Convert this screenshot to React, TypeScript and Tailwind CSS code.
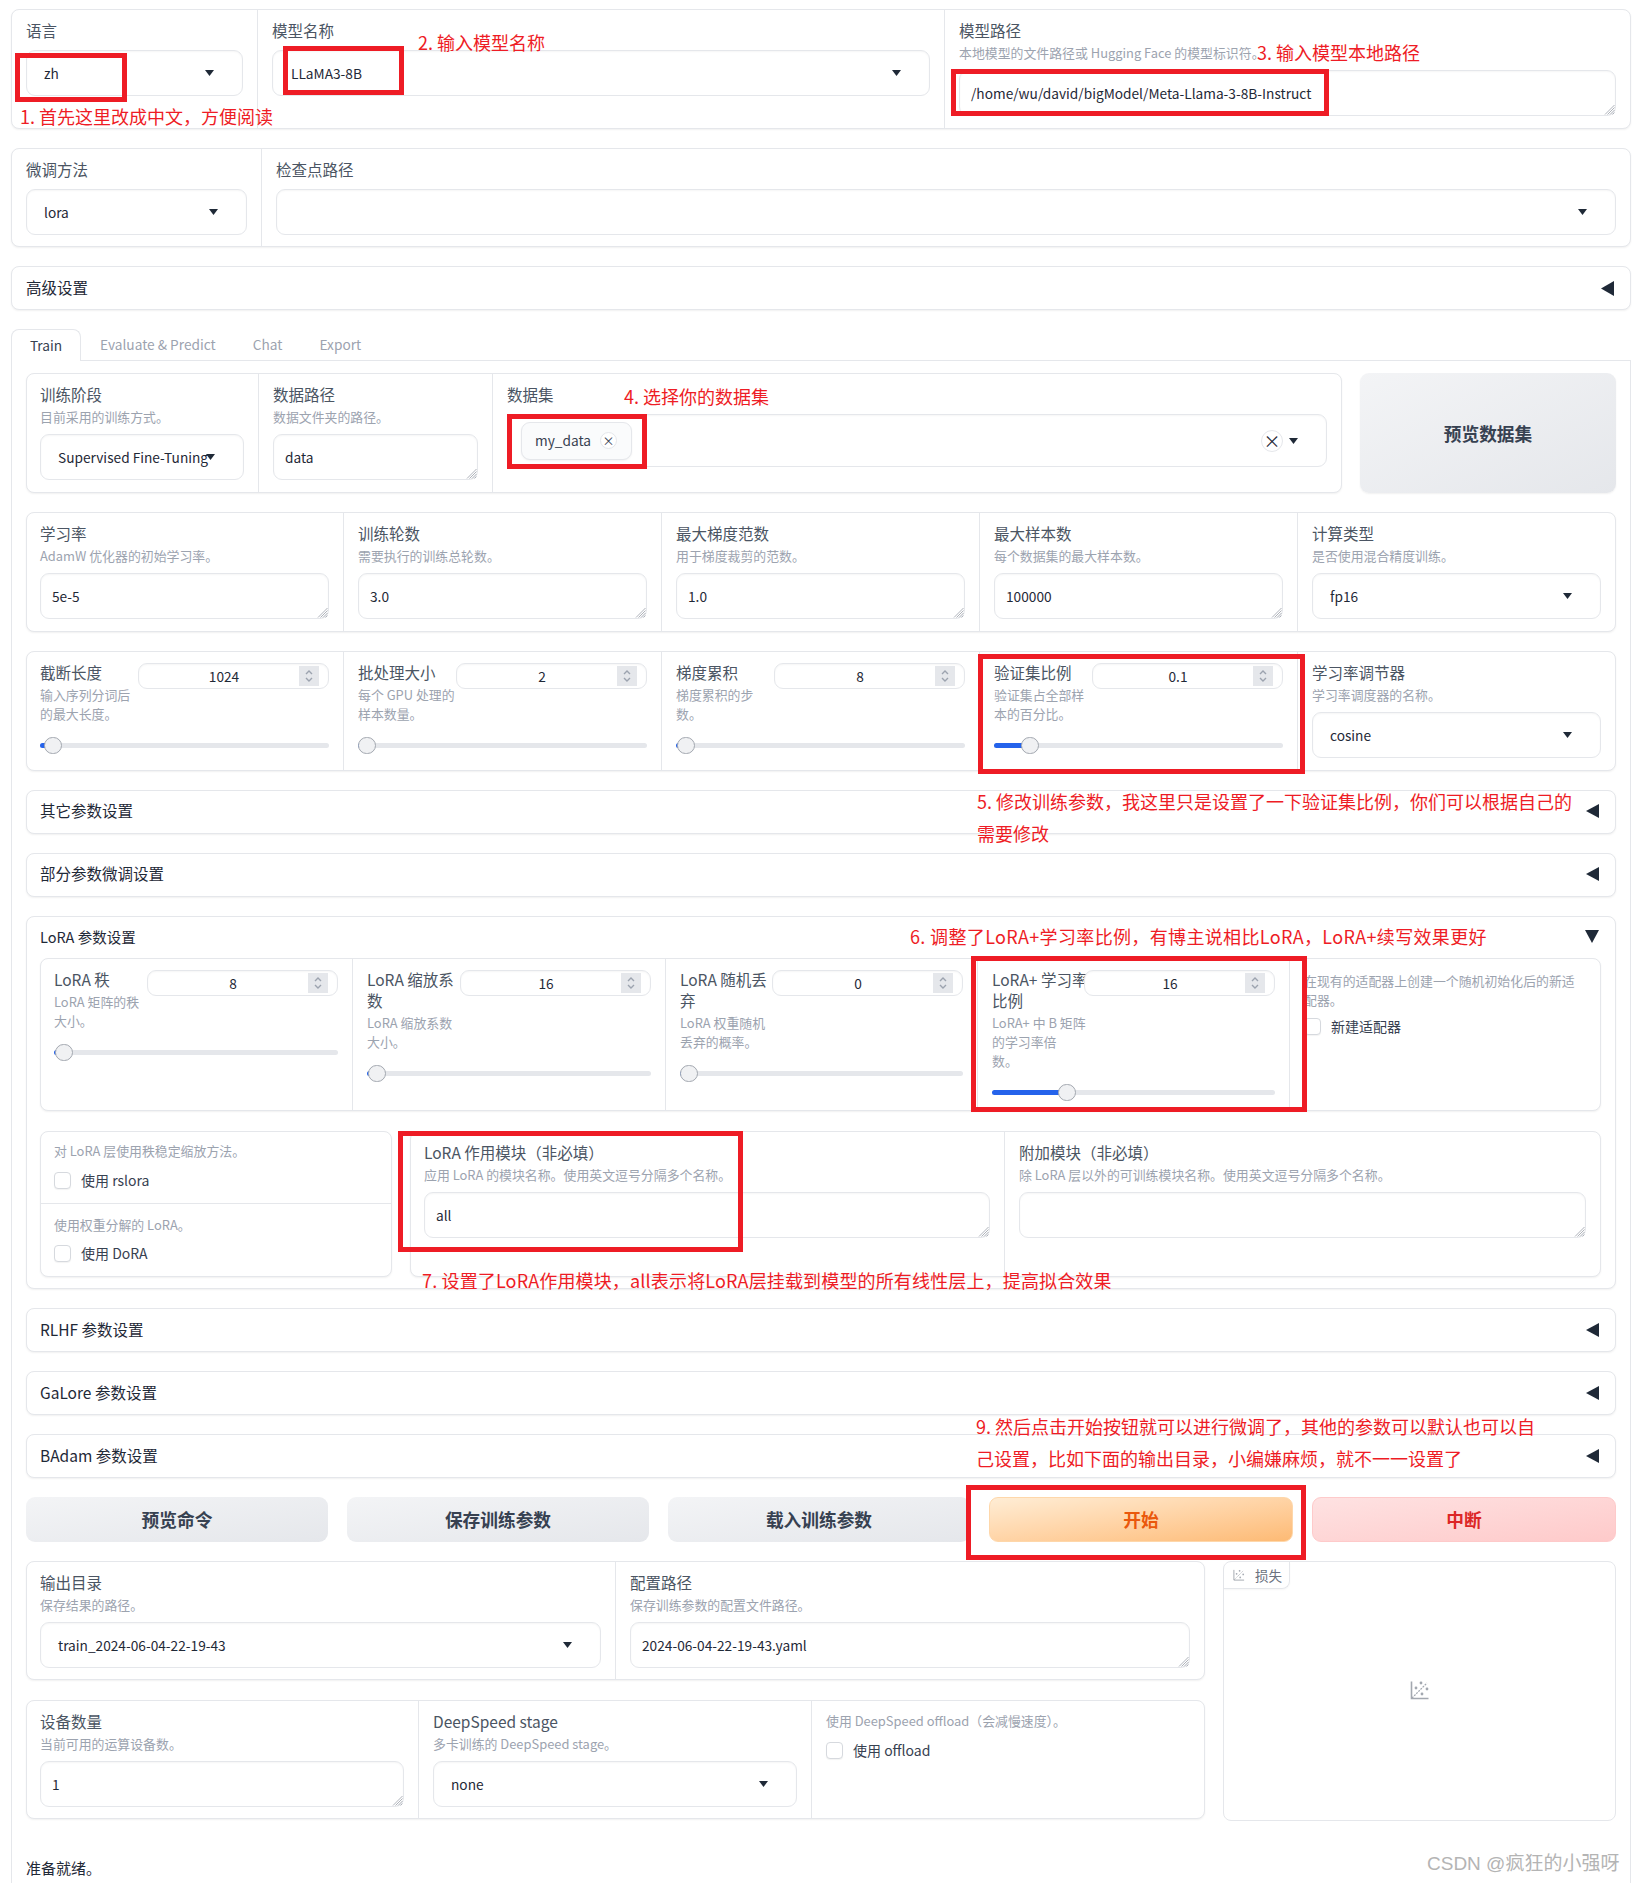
import type { ReactNode } from 'react';
import clsx from 'clsx';

const panelCls = 'flex rounded-[8px] border border-[#e5e7eb] bg-white shadow-[0_1px_2px_rgba(0,0,0,0.06)]';
const boxCls = 'rounded-[9px] border border-[#e5e7eb] bg-white shadow-[inset_0_1px_2px_rgba(0,0,0,0.04)]';

function Panel({ className, children }: { className?: string; children: ReactNode }) {
  return <div className={clsx(panelCls, className)}>{children}</div>;
}

function Cell({ className, children, top = 'pt-[10px]' }: { className?: string; children: ReactNode; top?: string }) {
  return <div className={clsx('flex flex-col border-r border-[#e5e7eb] px-[14px] last:border-r-0', top, className)}>{children}</div>;
}

function Label({ children }: { children: ReactNode }) {
  return <div className="text-[15.5px] leading-[21px] text-[#4b5563]">{children}</div>;
}

function Desc({ children }: { children: ReactNode }) {
  return <div className="mt-[2px] text-[12.9px] leading-[19px] text-[#9ca3af]">{children}</div>;
}

function Caret() {
  return (
    <svg width="9" height="6" viewBox="0 0 9 6" className="shrink-0 fill-[#1f2937]">
      <path d="M0 0h9L4.5 6z" />
    </svg>
  );
}

function Select({ value, className, left = 'pl-[17px]' }: { value: string; className?: string; left?: string }) {
  return (
    <div className={clsx(boxCls, 'flex h-[46px] items-center pr-[28px] text-[13.7px] text-[#1f2937]', left, className)}>
      <div className="min-w-0 flex-1 whitespace-nowrap">{value}</div>
      <Caret />
    </div>
  );
}

function Area({ value = '', className }: { value?: string; className?: string }) {
  return (
    <div className={clsx('relative', className)}>
      <textarea
        readOnly
        rows={1}
        defaultValue={value}
        className={clsx(boxCls, 'block h-[46px] w-full resize-none px-[11px] py-[12px] text-[13.7px] leading-[20px] text-[#1f2937] outline-none')}
      />
      {/* resize grip */}
      <svg width="11" height="11" viewBox="0 0 11 11" fill="none" stroke="#9aa0a8" strokeWidth="0.8" className="absolute right-[1px] bottom-[1px]">
        <path d="M10.5 1L1 10.5M10.5 3.5L3.5 10.5M10.5 6L6 10.5M10.5 8.5L8.5 10.5" />
      </svg>
    </div>
  );
}

function Spinner() {
  return (
    <div className="mr-[9px] flex h-[20px] w-[20px] shrink-0 items-center justify-center bg-[#e5e7eb]">
      <svg width="12" height="16" viewBox="0 0 12 16" fill="none" stroke="#9ca3af" strokeWidth="1.4">
        <path d="M3 6l3-3 3 3M3 10l3 3 3-3" />
      </svg>
    </div>
  );
}

function Slider({ label, desc, value, offset, className }: { label: string; desc: string; value: string; offset: number; className?: string }) {
  return (
    <Cell className={className}>
      <div className="flex items-start">
        <div className="min-w-0 flex-1 whitespace-pre">
          <Label>{label}</Label>
          <div className="mt-[1px]">
            <Desc>{desc}</Desc>
          </div>
        </div>
        <div className={clsx(boxCls, 'mt-[1px] flex h-[26px] w-[191px] shrink-0 items-center')}>
          <div className="flex-1 pl-[10px] text-center text-[13.7px] text-[#1f2937]">{value}</div>
          <Spinner />
        </div>
      </div>
      <div className="relative mt-[13px] flex h-[18px] items-center">
        <div className="h-[5px] w-full rounded-full bg-[#e5e7eb]">
          <div className="h-[5px] rounded-l-full bg-[#2563eb]" style={{ width: offset }} />
        </div>
        <div
          className="absolute top-[1px] h-[17px] w-[18px] -translate-x-1/2 rounded-full border border-[#a3a8b0] bg-[#f0f1f3]"
          style={{ left: offset }}
        />
      </div>
    </Cell>
  );
}

function Check({ label, className = 'mt-[10px]' }: { label: string; className?: string }) {
  return (
    <div className={clsx('flex items-center gap-[10px] text-[14px] leading-[20px] text-[#374151]', className)}>
      <div className="h-[17px] w-[17px] rounded-[4px] border border-[#d6d9de] bg-white shadow-[0_1px_1px_rgba(0,0,0,0.05)]" />
      {label}
    </div>
  );
}

function Accordion({ title, raise }: { title: string; raise?: boolean }) {
  return (
    <div className={clsx(panelCls, 'h-[44px] shrink-0 items-center justify-between pr-[16px] pl-[13px] text-[15.5px] text-[#1f2937]', raise && 'pb-[2px]')}>
      {title}
      <svg width="13" height="14" viewBox="0 0 13 14" className="fill-[#1f2937]">
        <path d="M13 0v14L0 7z" />
      </svg>
    </div>
  );
}

function Btn({ children, className }: { children: ReactNode; className?: string }) {
  return (
    <button className={clsx('flex flex-1 items-center justify-center rounded-[9px] text-[17.7px] font-semibold', className)}>
      {children}
    </button>
  );
}

function PlotIcon({ size, className }: { size: number; className?: string }) {
  return (
    <svg width={size} height={size} viewBox="0 0 20 20" fill="none" className={className}>
      <path d="M1.5 1.5v17h17" stroke="#a3a8b0" strokeWidth="1.6" />
      <path d="M2 18L17 3" stroke="#a3a8b0" strokeWidth="1.2" strokeDasharray="2 1" />
      <circle cx="6" cy="8" r="1.4" fill="#a3a8b0" />
      <circle cx="11" cy="3" r="1.4" fill="#a3a8b0" />
      <circle cx="17" cy="9" r="1.4" fill="#a3a8b0" />
      <circle cx="12" cy="14" r="1.4" fill="#a3a8b0" />
    </svg>
  );
}

export default function App() {
  return (
    <div className="relative flex h-[1883px] w-[1634px] flex-col gap-[19px] overflow-hidden bg-white pt-[9px] pr-[3px] pl-[11px] font-['Noto_Sans_CJK_SC',sans-serif]">
      {/* top model row */}
      <Panel className="h-[120px] shrink-0">
        <Cell className="w-[246px]">
          <Label>语言</Label>
          <Select value="zh" className="mt-[9px]" />
        </Cell>
        <Cell className="w-[687px]">
          <Label>模型名称</Label>
          <Select value="LLaMA3-8B" left="pl-[18px]" className="mt-[9px]" />
        </Cell>
        <Cell className="flex-1">
          <Label>模型路径</Label>
          <Desc>本地模型的文件路径或 Hugging Face 的模型标识符。</Desc>
          <Area value="/home/wu/david/bigModel/Meta-Llama-3-8B-Instruct" className="mt-[8px]" />
        </Cell>
      </Panel>

      <Panel className="h-[99px] shrink-0">
        <Cell className="w-[250px]">
          <Label>微调方法</Label>
          <Select value="lora" className="mt-[9px]" />
        </Cell>
        <Cell className="flex-1">
          <Label>检查点路径</Label>
          <Select value="" className="mt-[9px]" />
        </Cell>
      </Panel>

      <div className={clsx(panelCls, 'h-[44px] shrink-0 items-center justify-between pr-[16px] pl-[14px] text-[15.5px] text-[#1f2937]')}>
        高级设置
        <svg width="13" height="15" viewBox="0 0 13 15" className="fill-[#1f2937]">
          <path d="M13 0v15L0 7.5z" />
        </svg>
      </div>

      {/* tabs */}
      <div className="flex min-h-0 flex-1 flex-col">
        <div className="relative z-10 flex h-[31px] text-[13.7px] text-[#9ca3af]">
          <div className="-mb-px flex w-[70px] items-center justify-center rounded-t-[8px] border border-b-0 border-[#e5e7eb] bg-white text-[#374151]">Train</div>
          <div className="ml-[19px] flex items-center">Evaluate &amp; Predict</div>
          <div className="ml-[37px] flex items-center">Chat</div>
          <div className="ml-[37px] flex items-center">Export</div>
        </div>

        <div className="flex flex-1 flex-col gap-[19px] border-x border-t border-[#e5e7eb] px-[14px] pt-[12px]">
          <div className="flex h-[120px] shrink-0 gap-[18px]">
            <Panel className="flex-1">
              <Cell className="w-[232px] pl-[13px]">
                <Label>训练阶段</Label>
                <Desc>目前采用的训练方式。</Desc>
                <Select value="Supervised Fine-Tuning" className="mt-[8px]" />
              </Cell>
              <Cell className="w-[234px]">
                <Label>数据路径</Label>
                <Desc>数据文件夹的路径。</Desc>
                <Area value="data" className="mt-[8px]" />
              </Cell>
              <Cell className="flex-1">
                <Label>数据集</Label>
                <div className={clsx(boxCls, 'mt-[9px] flex h-[53px] items-center pr-[28px] pl-[13px] text-[13.7px] text-[#374151]')}>
                  <div className="flex h-[38px] w-[111px] items-center justify-between rounded-[9px] border border-[#e5e7eb] bg-[#fafbfc] pr-[14px] pl-[13px] shadow-[0_1px_2px_rgba(0,0,0,0.05)]">
                    my_data
                    <span className="flex h-[17px] w-[17px] items-center justify-center rounded-full border border-[#e5e7eb] bg-white text-[12px] leading-none">×</span>
                  </div>
                  <div className="flex-1" />
                  <span className="mr-[6px] flex h-[22px] w-[22px] items-center justify-center rounded-full border border-[#e5e7eb] text-[17px] leading-none text-[#1f2937]">×</span>
                  <Caret />
                </div>
              </Cell>
            </Panel>
            <Btn className="w-[256px] flex-none bg-linear-to-br from-[#f3f4f6] to-[#e5e7eb] text-[#374151] shadow-[0_1px_2px_rgba(0,0,0,0.06)]">预览数据集</Btn>
          </div>

          <Panel className="h-[120px] shrink-0">
            <Cell className="w-[317px] pl-[13px]">
              <Label>学习率</Label>
              <Desc>AdamW 优化器的初始学习率。</Desc>
              <Area value="5e-5" className="mt-[8px]" />
            </Cell>
            <Cell className="w-[318px]">
              <Label>训练轮数</Label>
              <Desc>需要执行的训练总轮数。</Desc>
              <Area value="3.0" className="mt-[8px]" />
            </Cell>
            <Cell className="w-[318px]">
              <Label>最大梯度范数</Label>
              <Desc>用于梯度裁剪的范数。</Desc>
              <Area value="1.0" className="mt-[8px]" />
            </Cell>
            <Cell className="w-[318px]">
              <Label>最大样本数</Label>
              <Desc>每个数据集的最大样本数。</Desc>
              <Area value="100000" className="mt-[8px]" />
            </Cell>
            <Cell className="flex-1">
              <Label>计算类型</Label>
              <Desc>是否使用混合精度训练。</Desc>
              <Select value="fp16" className="mt-[8px]" />
            </Cell>
          </Panel>

          <Panel className="h-[120px] shrink-0">
            <Slider className="w-[317px] pl-[13px]" label="截断长度" desc={'输入序列分词后\n的最大长度。'} value="1024" offset={13} />
            <Slider className="w-[318px]" label="批处理大小" desc={'每个 GPU 处理的\n样本数量。'} value="2" offset={9} />
            <Slider className="w-[318px]" label="梯度累积" desc={'梯度累积的步\n数。'} value="8" offset={10} />
            <Slider className="w-[318px]" label="验证集比例" desc={'验证集占全部样\n本的百分比。'} value="0.1" offset={36} />
            <Cell className="flex-1">
              <Label>学习率调节器</Label>
              <Desc>学习率调度器的名称。</Desc>
              <Select value="cosine" className="mt-[8px]" />
            </Cell>
          </Panel>

          <Accordion title="其它参数设置" raise />
          <Accordion title="部分参数微调设置" raise />

          {/* LoRA section */}
          <div className={clsx(panelCls, 'h-[373px] shrink-0 flex-col pr-[14px] pl-[13px]')}>
            <div className="flex h-[41px] items-center justify-between pr-[2px] pb-[2px] text-[14.5px] text-[#1f2937]">
              LoRA 参数设置
              <svg width="14" height="13" viewBox="0 0 14 13" className="fill-[#1f2937]">
                <path d="M0 0h14L7 13z" />
              </svg>
            </div>
            <Panel className="h-[153px] shrink-0">
              <Slider className="w-[312px] pl-[13px]" label="LoRA 秩" desc={'LoRA 矩阵的秩\n大小。'} value="8" offset={10} />
              <Slider className="w-[313px]" label={'LoRA 缩放系\n数'} desc={'LoRA 缩放系数\n大小。'} value="16" offset={10} />
              <Slider className="w-[312px]" label={'LoRA 随机丢\n弃'} desc={'LoRA 权重随机\n丢弃的概率。'} value="0" offset={9} />
              <Slider className="w-[312px]" label={'LoRA+ 学习率\n比例'} desc={'LoRA+ 中 B 矩阵\n的学习率倍\n数。'} value="16" offset={75} />
              <Cell className="flex-1">
                <div className="whitespace-pre">
                  <Desc>{'在现有的适配器上创建一个随机初始化后的新适\n配器。'}</Desc>
                </div>
                <Check label="新建适配器" className="mt-[7px]" />
              </Cell>
            </Panel>

            <div className="mt-[20px] flex h-[146px] shrink-0 gap-[18px]">
              <Panel className="w-[352px] flex-col">
                <div className="h-[72px] border-b border-[#e5e7eb] pt-[7px] pr-[14px] pl-[13px]">
                  <Desc>对 LoRA 层使用秩稳定缩放方法。</Desc>
                  <Check label="使用 rslora" />
                </div>
                <div className="pt-[9px] pr-[14px] pl-[13px]">
                  <Desc>使用权重分解的 LoRA。</Desc>
                  <Check label="使用 DoRA" className="mt-[9px]" />
                </div>
              </Panel>
              <Panel className="flex-1">
                <Cell className="w-[594px] pl-[13px]">
                  <Label>LoRA 作用模块（非必填）</Label>
                  <Desc>应用 LoRA 的模块名称。使用英文逗号分隔多个名称。</Desc>
                  <Area value="all" className="mt-[8px]" />
                </Cell>
                <Cell className="flex-1">
                  <Label>附加模块（非必填）</Label>
                  <Desc>除 LoRA 层以外的可训练模块名称。使用英文逗号分隔多个名称。</Desc>
                  <Area className="mt-[8px]" />
                </Cell>
              </Panel>
            </div>
          </div>

          <Accordion title="RLHF 参数设置" />
          <Accordion title="GaLore 参数设置" />
          <Accordion title="BAdam 参数设置" />

          <div className="flex h-[45px] shrink-0 gap-[19px]">
            <Btn className="bg-linear-to-br from-[#f3f4f6] to-[#e5e7eb] text-[#374151]">预览命令</Btn>
            <Btn className="bg-linear-to-br from-[#f3f4f6] to-[#e5e7eb] text-[#374151]">保存训练参数</Btn>
            <Btn className="bg-linear-to-br from-[#f3f4f6] to-[#e5e7eb] text-[#374151]">载入训练参数</Btn>
            <Btn className="border border-[#fed7aa] bg-linear-to-br from-[#ffedd5] to-[#fdba74] text-[#ea580c]">开始</Btn>
            <Btn className="border border-[#fecaca] bg-linear-to-br from-[#fee2e2] to-[#fecaca] text-[#dc2626]">中断</Btn>
          </div>

          <div className="flex shrink-0 gap-[18px]">
            <div className="flex w-[1179px] flex-col gap-[20px]">
              <Panel className="h-[119px]">
                <Cell className="w-[589px] pl-[13px]">
                  <Label>输出目录</Label>
                  <Desc>保存结果的路径。</Desc>
                  <Select value="train_2024-06-04-22-19-43" className="mt-[8px]" />
                </Cell>
                <Cell className="flex-1">
                  <Label>配置路径</Label>
                  <Desc>保存训练参数的配置文件路径。</Desc>
                  <Area value="2024-06-04-22-19-43.yaml" className="mt-[8px]" />
                </Cell>
              </Panel>
              <Panel className="h-[119px]">
                <Cell className="w-[392px] pl-[13px]">
                  <Label>设备数量</Label>
                  <Desc>当前可用的运算设备数。</Desc>
                  <Area value="1" className="mt-[8px]" />
                </Cell>
                <Cell className="w-[393px]">
                  <Label>DeepSpeed stage</Label>
                  <Desc>多卡训练的 DeepSpeed stage。</Desc>
                  <Select value="none" className="mt-[8px]" />
                </Cell>
                <Cell className="flex-1" top="pt-[8px]">
                  <Desc>使用 DeepSpeed offload（会减慢速度）。</Desc>
                  <Check label="使用 offload" />
                </Cell>
              </Panel>
            </div>
            <div className="relative h-[260px] flex-1 rounded-[8px] border border-[#e5e7eb] bg-white">
              <div className="flex h-[27px] w-[66px] items-center gap-[10px] rounded-br-[8px] border-r border-b border-[#e5e7eb] pl-[9px] text-[13.5px] text-[#6b7280] shadow-[0_1px_2px_rgba(0,0,0,0.04)]">
                <PlotIcon size={12} />
                损失
              </div>
              <div className="flex h-[202px] items-center justify-center">
                <PlotIcon size={20} />
              </div>
            </div>
          </div>

          <div className="mt-[18px] text-[15px] leading-[20px] text-[#1f2937]">准备就绪。</div>
        </div>
      </div>

      {/* red annotations drawn on top of the screenshot */}
      <div className="absolute top-[53px] left-[15px] h-[49px] w-[112px] border-[5px] border-[#ee1c25]" />
      <div className="absolute top-[46px] left-[283px] h-[49px] w-[121px] border-[5px] border-[#ee1c25]" />
      <div className="absolute top-[69px] left-[951px] h-[47px] w-[378px] border-[5px] border-[#ee1c25]" />
      <div className="absolute top-[414px] left-[507px] h-[55px] w-[140px] border-[5px] border-[#ee1c25]" />
      <div className="absolute top-[654px] left-[978px] h-[120px] w-[327px] border-[5px] border-[#ee1c25]" />
      <div className="absolute top-[956px] left-[971px] h-[156px] w-[336px] border-[5px] border-[#ee1c25]" />
      <div className="absolute top-[1131px] left-[398px] h-[121px] w-[345px] border-[5px] border-[#ee1c25]" />
      <div className="absolute top-[1485px] left-[966px] h-[75px] w-[340px] border-[5px] border-[#ee1c25]" />

      <div className="absolute top-[104px] left-[20px] text-[18px] leading-[24px] whitespace-nowrap text-[#ee1c25]">1. 首先这里改成中文，方便阅读</div>
      <div className="absolute top-[30px] left-[418px] text-[18px] leading-[24px] whitespace-nowrap text-[#ee1c25]">2. 输入模型名称</div>
      <div className="absolute top-[40px] left-[1257px] text-[18px] leading-[24px] whitespace-nowrap text-[#ee1c25]">3. 输入模型本地路径</div>
      <div className="absolute top-[384px] left-[624px] text-[18px] leading-[24px] whitespace-nowrap text-[#ee1c25]">4. 选择你的数据集</div>
      <div className="absolute top-[789px] left-[977px] text-[18px] leading-[24px] whitespace-nowrap text-[#ee1c25]">5. 修改训练参数，我这里只是设置了一下验证集比例，你们可以根据自己的</div>
      <div className="absolute top-[821px] left-[977px] text-[18px] leading-[24px] whitespace-nowrap text-[#ee1c25]">需要修改</div>
      <div className="absolute top-[924px] left-[910px] text-[18px] leading-[24px] tracking-[0.35px] whitespace-nowrap text-[#ee1c25]">6. 调整了LoRA+学习率比例，有博主说相比LoRA，LoRA+续写效果更好</div>
      <div className="absolute top-[1268px] left-[422px] text-[18px] leading-[24px] tracking-[0.15px] whitespace-nowrap text-[#ee1c25]">7. 设置了LoRA作用模块，all表示将LoRA层挂载到模型的所有线性层上，提高拟合效果</div>
      <div className="absolute top-[1414px] left-[976px] text-[18px] leading-[24px] whitespace-nowrap text-[#ee1c25]">9. 然后点击开始按钮就可以进行微调了，其他的参数可以默认也可以自</div>
      <div className="absolute top-[1446px] left-[976px] text-[18px] leading-[24px] whitespace-nowrap text-[#ee1c25]">己设置，比如下面的输出目录，小编嫌麻烦，就不一一设置了</div>

      <div className="absolute top-[1851px] left-[1427px] font-['Liberation_Sans','Noto_Sans_CJK_SC',sans-serif] text-[19px] leading-[26px] whitespace-nowrap text-[#b4b4b4]">CSDN @疯狂的小强呀</div>
    </div>
  );
}
